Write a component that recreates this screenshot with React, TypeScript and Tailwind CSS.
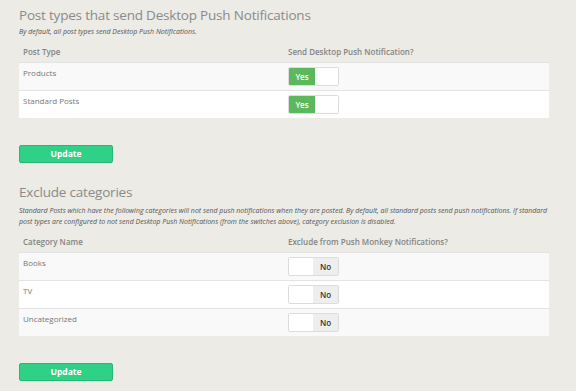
import React from "react";

function Toggle({ on }: { on: boolean }) {
  return (
    <div className="flex h-[19px] w-[51px] overflow-hidden rounded-[2px] border border-[#dcdcdc] bg-white">
      {on ? (
        <>
          <div className="flex w-[26px] items-center justify-center bg-[#5cb85c] text-[8px] font-semibold text-white">Yes</div>
          <div className="flex-1 bg-white" />
        </>
      ) : (
        <>
          <div className="flex-1 bg-white" />
          <div className="flex w-[25px] items-center justify-center bg-[#eeeeee] text-[8px] font-semibold text-[#333]">No</div>
        </>
      )}
    </div>
  );
}

function Table({ head1, head2, rows }: { head1: string; head2: string; rows: { name: string; on: boolean }[] }) {
  return (
    <div className="w-[530px]">
      <div className="flex h-[20px] items-start pt-[4px] text-[8px] font-semibold leading-[12px] text-[#858585]">
        <div className="w-[265px] px-[4px]">{head1}</div>
        <div className="px-[4px]">{head2}</div>
      </div>
      {rows.map((r, i) => (
        <div
          key={r.name}
          className={`flex h-[28px] border-t border-[#e3e3e3] ${i % 2 === 0 ? "bg-[#f9f9f9]" : "bg-white"}`}
        >
          <div className="w-[265px] px-[4px] pt-[4px] text-[8px] leading-[12px] text-[#777]">{r.name}</div>
          <div className="px-[4px] pt-[4px]">
            <Toggle on={r.on} />
          </div>
        </div>
      ))}
    </div>
  );
}

function UpdateButton() {
  return (
    <button className="flex h-[18px] w-[94px] items-center justify-center rounded-[2px] border border-[#27b874] bg-[#2ed186] text-[8.5px] font-bold text-white">
      Update
    </button>
  );
}

export default function App() {
  return (
    <div
      className="h-[391px] w-[576px] overflow-hidden bg-[#ecebe6] pl-[19px]"
      style={{ fontFamily: '"Open Sans", sans-serif' }}
    >
      <h1 className="pt-[7px] text-[13.5px] leading-[16px] tracking-[-0.2px] text-[#8a8a8a]">Post types that send Desktop Push Notifications</h1>
      <p className="mt-[4px] text-[7px] italic leading-[10px] text-[#555]">By default, all post types send Desktop Push Notifications.</p>
      <div className="mt-[5px]">
        <Table
          head1="Post Type"
          head2="Send Desktop Push Notification?"
          rows={[
            { name: "Products", on: true },
            { name: "Standard Posts", on: true },
          ]}
        />
      </div>
      <div className="mt-[27px]">
        <UpdateButton />
      </div>
      <h2 className="mt-[21px] text-[13.5px] leading-[16px] tracking-[-0.2px] text-[#8a8a8a]">Exclude categories</h2>
      <p className="mt-[5px] w-[535px] text-[7px] italic leading-[11px] text-[#555]">
        Standard Posts which have the following categories will not send push notifications when they are posted. By default, all standard posts send push notifications. If standard post types are configured to not send Desktop Push Notifications (from the switches above), category exclusion is disabled.
      </p>
      <div className="mt-[5px]">
        <Table
          head1="Category Name"
          head2="Exclude from Push Monkey Notifications?"
          rows={[
            { name: "Books", on: false },
            { name: "TV", on: false },
            { name: "Uncategorized", on: false },
          ]}
        />
      </div>
      <div className="mt-[27px]">
        <UpdateButton />
      </div>
    </div>
  );
}
